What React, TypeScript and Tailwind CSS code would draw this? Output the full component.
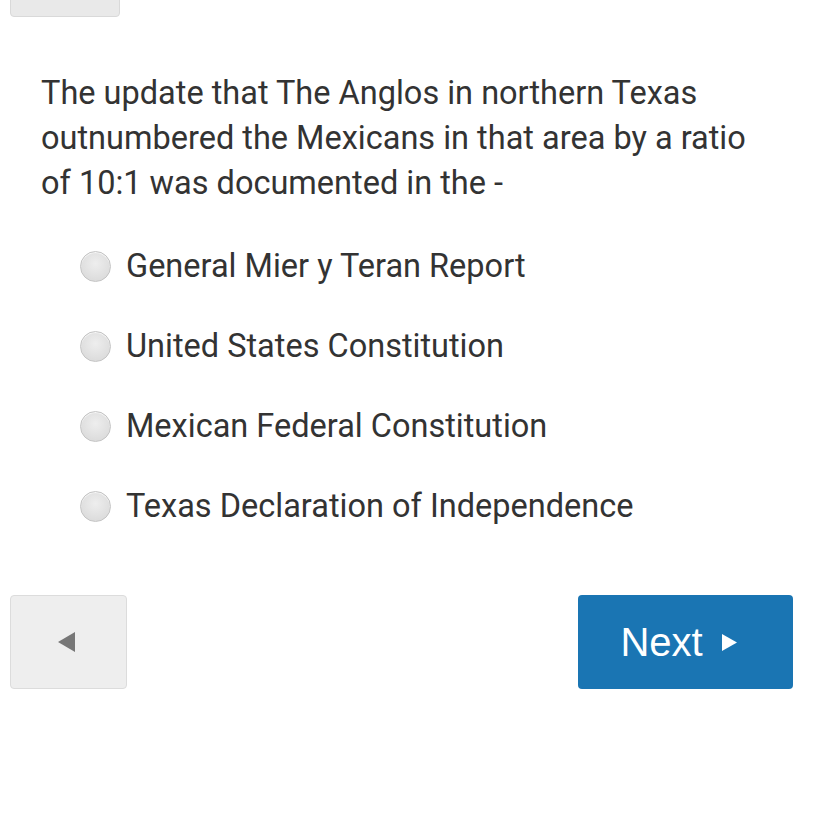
export default function App() {
  const options = [
    "General Mier y Teran Report",
    "United States Constitution",
    "Mexican Federal Constitution",
    "Texas Declaration of Independence",
  ];

  return (
    <div className="w-[828px] h-[829px] bg-white overflow-hidden font-['Roboto',sans-serif] text-[#333333]">
      {/* top button edge */}
      <div className="ml-[10px] -mt-[40px] w-[110px] h-[57px] bg-[#e9e9e9] border border-[#d9d9d9] rounded-[4px]" />

      <p className="mt-[54px] ml-[41px] w-[730px] text-[32.5px] leading-[45px]">
        The update that The Anglos in northern Texas outnumbered the Mexicans in that area by a ratio of 10:1 was documented in the -
      </p>

      <div className="mt-[20px] ml-[80px] flex flex-col">
        {options.map((o) => (
          <label key={o} className="h-[80px] flex items-center gap-[15px]">
            <span className="w-[31px] h-[31px] rounded-full border border-[#c4c4c4] bg-[radial-gradient(circle_at_50%_40%,#eeeeee,#d6d6d6)] shadow-[inset_0_1px_1px_rgba(255,255,255,0.8)]" />
            <span className="text-[32.5px] leading-[45px] pt-[1px]">{o}</span>
          </label>
        ))}
      </div>

      <div className="mt-[49px] pl-[10px] pr-[35px] flex justify-between">
        <button className="w-[117px] h-[94px] bg-[#eeeeee] border border-[#dcdcdc] rounded-[4px] flex items-center justify-center">
          <svg width="18" height="20" viewBox="0 0 18 20" className="-ml-[4px]">
            <polygon points="17,0 17,20 0,10" fill="#777777" />
          </svg>
        </button>
        <button className="w-[215px] h-[94px] bg-[#1a75b3] rounded-[4px] flex items-center justify-center gap-[19px] pr-[14px] text-white font-['Liberation_Sans',Arial,sans-serif] text-[40px]">
          <span>Next</span>
          <svg width="15" height="17" viewBox="0 0 15 17">
            <polygon points="0,0 15,8.5 0,17" fill="#ffffff" />
          </svg>
        </button>
      </div>
    </div>
  );
}
